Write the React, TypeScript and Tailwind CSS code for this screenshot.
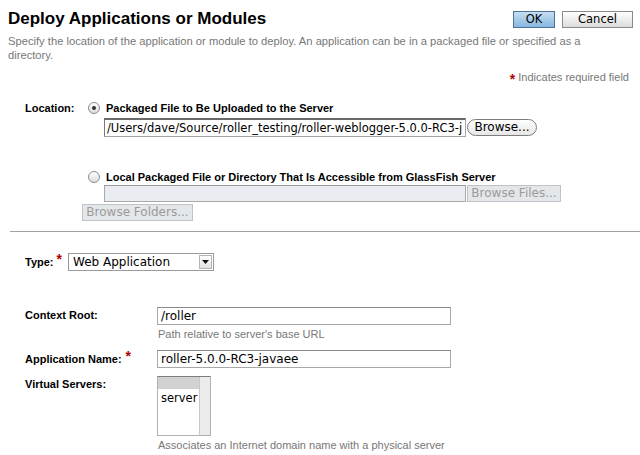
import React from "react";

const ctl = "font-['DejaVu_Sans',sans-serif]";

const Req = () => (
  <span className="inline-block h-[9px] text-[#b00000] text-[14px] font-bold leading-[12px] align-top">*</span>
);

const Radio = ({ checked }: { checked?: boolean }) => (
  <span className="w-[12px] h-[12px] rounded-full border border-[#8c8c8c] bg-gradient-to-b from-white to-[#dcdcdc] flex items-center justify-center shrink-0">
    {checked && <span className="w-[4px] h-[4px] rounded-full bg-[#333]" />}
  </span>
);

const TextBox = ({ value }: { value: string }) => (
  <div
    className={`${ctl} w-[294px] h-[18px] border border-[#a8a8a8] border-t-[#8a8a8a] bg-white text-[12px] leading-[16px] pl-[3px] text-black`}
  >
    {value}
  </div>
);

const Hint = ({ children }: { children: React.ReactNode }) => (
  <p className="text-[11px] leading-[13px] text-[#777] mt-[3px] ml-[1px]">{children}</p>
);

export default function App() {
  return (
    <div className="w-[640px] h-[455px] overflow-hidden bg-white text-black font-['Liberation_Sans',Arial,sans-serif]">
      <div className="flex items-start justify-between pl-2 pr-[7px] pt-[9px]">
        <h1 className="text-[17px] font-bold leading-[20px]">Deploy Applications or Modules</h1>
        <div className={`${ctl} flex gap-[7px] mt-[2px] text-[11.5px]`}>
          <button className="w-[42px] h-[17px] border border-[#4f7397] bg-gradient-to-b from-[#c6def2] to-[#86b7e0] leading-[15px]">
            OK
          </button>
          <button className="w-[71px] h-[17px] border border-[#8a8a8a] bg-gradient-to-b from-white to-[#dcdcdc] leading-[15px]">
            Cancel
          </button>
        </div>
      </div>

      <p className="pl-2 w-[624px] mt-[5px] text-[11.2px] leading-[14px] text-[#777]">
        Specify the location of the application or module to deploy. An application can be in a packaged file or
        specified as a directory.
      </p>

      <div className="flex justify-end items-center gap-[3px] pr-[11px] mt-[8px] h-[14px] text-[11px] leading-[14px] text-[#777]">
        <Req />
        <span>Indicates required field</span>
      </div>

      {/* location */}
      <div className="pl-[25px] mt-[18px]">
        <div className="flex items-start">
          <div className="w-[63px] h-[12px] flex items-center text-[11px] font-bold">Location:</div>
          <div className="flex flex-col">
            <div className="flex items-center gap-[6px] h-[12px]">
              <Radio checked />
              <span className="text-[11px] font-bold">Packaged File to Be Uploaded to the Server</span>
            </div>
            <div className="flex items-center mt-[4px] ml-[16px]">
              <div
                className={`${ctl} w-[362px] h-[19px] overflow-hidden whitespace-nowrap border border-[#a5a5a5] border-t-2 border-t-[#6a6a6a] border-l-[#7a7a7a] bg-white text-[11.5px] leading-[16px] pl-[2px]`}
              >
                /Users/dave/Source/roller_testing/roller-weblogger-5.0.0-RC3-j
              </div>
              <button
                className={`${ctl} ml-[1px] w-[70px] h-[17px] rounded-full border border-[#7d7d7d] bg-gradient-to-b from-white to-[#e6e6e6] text-[12px] leading-[15px]`}
              >
                Browse...
              </button>
            </div>
            <div className="flex items-center gap-[6px] h-[12px] mt-[34px]">
              <Radio />
              <span className="text-[11px] font-bold">
                Local Packaged File or Directory That Is Accessible from GlassFish Server
              </span>
            </div>
            <div className="flex items-center mt-[2px] ml-[16px]">
              <div className="w-[362px] h-[17px] border border-[#a9a9a9] border-t-[#9a9a9a] bg-[#e9edf1]" />
              <button
                className={`${ctl} ml-[1px] w-[94px] h-[17px] border border-[#bfc3c7] bg-[#e4e7ea] text-[12px] leading-[15px] text-[#9a9a9a]`}
              >
                Browse Files...
              </button>
            </div>
          </div>
        </div>
        <button
          className={`${ctl} block ml-[57px] mt-[2px] w-[111px] h-[17px] border border-[#bfc3c7] bg-[#e4e7ea] text-[12px] leading-[15px] text-[#9a9a9a]`}
        >
          Browse Folders...
        </button>
      </div>

      <div className="ml-[10px] mt-[10px] h-px bg-[#9ea3a8]" />

      {/* type */}
      <div className="pl-[25px] mt-[21px] h-[18px] flex items-center">
        <span className="text-[11px] font-bold leading-[13px]">Type:</span>
        <span className="ml-[3px] mr-[6px] self-start">
          <Req />
        </span>
        <div className="w-[146px] h-[18px] border border-[#9a9a9a] bg-white flex items-center">
          <span className={`${ctl} flex-1 text-[12px] pl-[4px] leading-[16px]`}>Web Application</span>
          <span className="w-[13px] h-[14px] mr-[1px] border border-[#b5b5b5] bg-gradient-to-b from-white to-[#e2e2e2] flex items-center justify-center">
            <svg width="7" height="4" viewBox="0 0 7 4">
              <path d="M0 0h7L3.5 4z" fill="#111" />
            </svg>
          </span>
        </div>
      </div>

      {/* context root */}
      <div className="pl-[25px] mt-[36px] flex items-start">
        <div className="w-[132px] pt-[2px] text-[11px] font-bold leading-[13px]">Context Root:</div>
        <div>
          <TextBox value="/roller" />
          <Hint>Path relative to server's base URL</Hint>
        </div>
      </div>

      {/* app name */}
      <div className="pl-[25px] mt-[9px] flex items-center">
        <div className="w-[132px] flex items-center text-[11px] font-bold leading-[13px]">
          Application Name:
          <span className="ml-[4px] self-start -mt-[3px]">
            <Req />
          </span>
        </div>
        <TextBox value="roller-5.0.0-RC3-javaee" />
      </div>

      {/* virtual servers */}
      <div className="pl-[25px] mt-[8px] flex items-start">
        <div className="w-[132px] pt-[2px] text-[11px] font-bold leading-[13px]">Virtual Servers:</div>
        <div>
          <div className="w-[54px] h-[60px] border border-[#b0b0b0] border-t-[#7c7c7c] bg-white flex">
            <div className="flex-1 flex flex-col">
              <div className="h-[12px] bg-[#d2d2d2]" />
              <div className={`${ctl} text-[11.5px] leading-[14px] pl-[3px] mt-[2px]`}>server</div>
            </div>
            <div className="w-[11px] border-l border-[#c8c8c8] bg-[#ececec]" />
          </div>
          <Hint>Associates an Internet domain name with a physical server</Hint>
        </div>
      </div>
    </div>
  );
}
